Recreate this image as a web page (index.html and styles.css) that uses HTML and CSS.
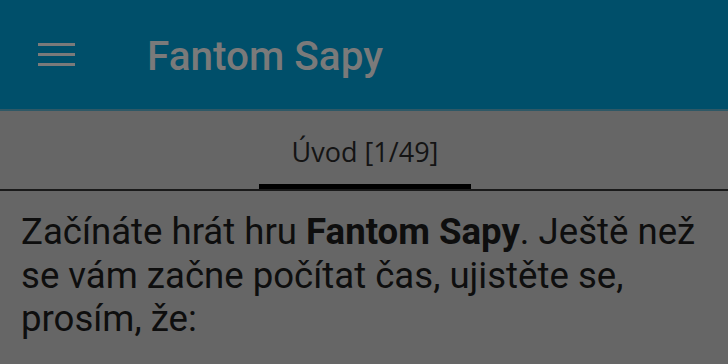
FILE: index.html
```html
<!DOCTYPE html>
<html>
<head>
<meta charset="utf-8">
<link rel="stylesheet" href="styles.css">
</head>
<body>
<header class="appbar">
  <div class="menu-btn">
    <svg width="38" height="24" viewBox="0 0 38 24"><rect x="0" y="0" width="37" height="3" fill="#7a7a7a"/><rect x="0" y="10" width="37" height="3" fill="#7a7a7a"/><rect x="0" y="20" width="37" height="3" fill="#7a7a7a"/></svg>
  </div>
  <h1 class="title">Fantom Sapy</h1>
</header>
<nav class="tabs">
  <div class="tab active">Úvod [1/49]</div>
</nav>
<main class="content">
  <p>Začínáte hrát hru <b>Fantom Sapy</b>. Ještě než se vám začne počítat čas, ujistěte se, prosím, že:</p>
</main>
</body>
</html>
```
FILE: styles.css
```css
html, body { margin: 0; padding: 0; }
body {
  width: 728px;
  height: 364px;
  overflow: hidden;
  background: #666666;
  font-family: Roboto, "Liberation Sans", sans-serif;
}
.appbar {
  height: 109px;
  background: #004f6a;
  border-bottom: 2px solid #2e5866;
  display: flex;
  align-items: center;
}
.menu-btn {
  width: 38px;
  margin-left: 38px;
  margin-top: 1px;
  display: flex;
}
.title {
  margin: 2px 0 0 71px;
  font-size: 40.5px;
  font-weight: 500;
  color: #7a7a7a;
}
.tabs {
  height: 78px;
  display: flex;
  justify-content: center;
  border-bottom: 2px solid #1a1a1a;
}
.tab {
  width: 212px;
  box-sizing: border-box;
  text-align: center;
  padding-top: 22px;
  font-family: "Open Sans", "Noto Sans", sans-serif;
  font-size: 27px;
  color: #141414;
  margin-left: 2px;
}
.tab.active { border-bottom: 5px solid #000; }
.content { padding: 19px 14px 0 21px; }
.content p {
  margin: 0;
  font-size: 36.6px;
  line-height: 43.5px;
  color: #0e0e0e;
}
.content b { font-weight: 700; }
```
